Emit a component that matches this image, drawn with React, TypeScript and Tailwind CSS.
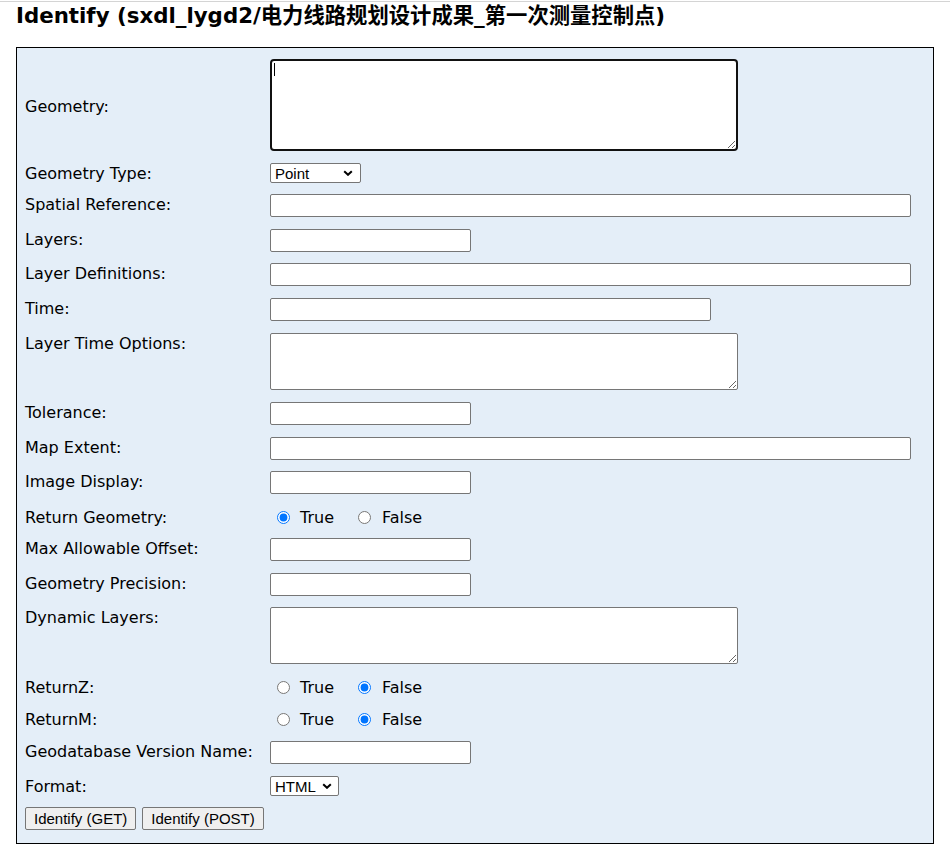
import React from "react";

const LABEL =
  "w-[245px] shrink-0 text-[16px] leading-[19px] text-black font-['DejaVu_Sans','Noto_Sans_CJK_SC',sans-serif]";
const CTRL_FONT =
  "font-['Liberation_Sans',Arial,sans-serif] text-[15px] leading-[17px] text-black";
const INPUT =
  "block h-[23px] border border-[#767676] rounded-[2px] bg-white px-[2px] font-['Liberation_Sans',Arial,sans-serif] text-[15px] text-black outline-none";
const TEXTAREA =
  "block h-[57px] w-[468px] border border-[#767676] rounded-[2px] bg-white p-[2px] font-['Liberation_Mono',monospace] text-[13px] text-black outline-none";

function Row({
  label,
  h,
  labelMt = "mt-[1px]",
  children,
}: {
  label: string;
  h: string;
  labelMt?: string;
  children: React.ReactNode;
}) {
  return (
    <div className={"flex items-start " + h}>
      <div className={LABEL + " " + labelMt}>{label}</div>
      <div className="flex items-start">{children}</div>
    </div>
  );
}

function Chevron({ pos }: { pos: string }) {
  return (
    <svg
      className={"absolute pointer-events-none " + pos}
      width="10"
      height="6"
      viewBox="0 0 10 6"
    >
      <path d="M1.2 1.2 L5 4.8 L8.8 1.2" stroke="#000" strokeWidth="2" fill="none" />
    </svg>
  );
}

function Radios({ name, trueChecked }: { name: string; trueChecked: boolean }) {
  return (
    <div className="flex items-start">
      <label className="flex items-start w-[88px]">
        <input
          type="radio"
          name={name}
          defaultChecked={trueChecked}
          className="m-0 ml-[7px] mt-[4px] w-[13px] h-[13px]"
        />
        <span className="ml-[10px] mt-[1px] text-[16px] leading-[19px] text-black font-['DejaVu_Sans',sans-serif]">
          True
        </span>
      </label>
      <label className="flex items-start">
        <input
          type="radio"
          name={name}
          defaultChecked={!trueChecked}
          className="m-0 mt-[4px] w-[13px] h-[13px]"
        />
        <span className="ml-[11px] mt-[1px] text-[16px] leading-[19px] text-black font-['DejaVu_Sans',sans-serif]">
          False
        </span>
      </label>
    </div>
  );
}

export default function App() {
  return (
    <div className="w-[950px] min-h-[853px] bg-white">
      <div className="mt-[1px] h-[1px] bg-[#d4d4d4]" />
      <h1 className="mt-[1px] ml-[16px] h-[25px] text-[21.33px] leading-[25px] font-bold text-black font-['DejaVu_Sans','Noto_Sans_CJK_SC',sans-serif] whitespace-nowrap">
        Identify (sxdl_lygd2/电力线路规划设计成果_第一次测量控制点)
      </h1>
      <form
        className="mt-[19px] ml-[16px] w-[918px] border border-black bg-[#e4eef8] pl-[8px] pt-[11px] pb-[12px]"
        onSubmit={(e) => e.preventDefault()}
      >
        <Row label="Geometry:" h="h-[104px]" labelMt="mt-[38px]">
          <div className="relative">
            <textarea className="block h-[92px] w-[468px] border-2 border-[#111] rounded-[4px] bg-white p-[2px] font-['Liberation_Mono',monospace] text-[13px] text-black outline-none" />
            <span className="absolute left-[4px] top-[4px] w-px h-[13px] bg-black" />
          </div>
        </Row>
        <Row label="Geometry Type:" h="h-[31px]">
          <div className="relative w-[91px] h-[20px]">
            <select
              className={
                "appearance-none block w-full h-full border border-[#767676] rounded-[2px] bg-white pl-[4px] pr-[18px] outline-none " +
                CTRL_FONT
              }
              defaultValue="Point"
            >
              <option>Point</option>
              <option>Multipoint</option>
              <option>Polyline</option>
              <option>Polygon</option>
              <option>Envelope</option>
            </select>
            <Chevron pos="right-[8px] top-[7px]" />
          </div>
        </Row>
        <Row label="Spatial Reference:" h="h-[35px]">
          <input type="text" className={INPUT + " w-[641px]"} />
        </Row>
        <Row label="Layers:" h="h-[34px]">
          <input type="text" className={INPUT + " w-[201px]"} />
        </Row>
        <Row label="Layer Definitions:" h="h-[35px]">
          <input type="text" className={INPUT + " w-[641px]"} />
        </Row>
        <Row label="Time:" h="h-[35px]">
          <input type="text" className={INPUT + " w-[441px]"} />
        </Row>
        <Row label="Layer Time Options:" h="h-[69px]">
          <textarea className={TEXTAREA} />
        </Row>
        <Row label="Tolerance:" h="h-[35px]">
          <input type="text" className={INPUT + " w-[201px]"} />
        </Row>
        <Row label="Map Extent:" h="h-[34px]">
          <input type="text" className={INPUT + " w-[641px]"} />
        </Row>
        <Row label="Image Display:" h="h-[36px]">
          <input type="text" className={INPUT + " w-[201px]"} />
        </Row>
        <Row label="Return Geometry:" h="h-[31px]">
          <Radios name="returnGeometry" trueChecked={true} />
        </Row>
        <Row label="Max Allowable Offset:" h="h-[35px]">
          <input type="text" className={INPUT + " w-[201px]"} />
        </Row>
        <Row label="Geometry Precision:" h="h-[34px]">
          <input type="text" className={INPUT + " w-[201px]"} />
        </Row>
        <Row label="Dynamic Layers:" h="h-[70px]">
          <textarea className={TEXTAREA} />
        </Row>
        <Row label="ReturnZ:" h="h-[32px]">
          <Radios name="returnZ" trueChecked={false} />
        </Row>
        <Row label="ReturnM:" h="h-[32px]">
          <Radios name="returnM" trueChecked={false} />
        </Row>
        <Row label="Geodatabase Version Name:" h="h-[35px]">
          <input type="text" className={INPUT + " w-[201px]"} />
        </Row>
        <Row label="Format:" h="h-[31px]">
          <div className="relative w-[69px] h-[20px]">
            <select
              className={
                "appearance-none block w-full h-full border border-[#767676] rounded-[2px] bg-white pl-[4px] pr-[16px] outline-none " +
                CTRL_FONT
              }
              defaultValue="HTML"
            >
              <option>HTML</option>
              <option>JSON</option>
              <option>KMZ</option>
            </select>
            <Chevron pos="right-[7px] top-[7px]" />
          </div>
        </Row>
        <div className="flex items-start gap-[6px] h-[24px]">
          <button
            type="button"
            className={
              "h-[23px] px-[8px] border border-[#767676] rounded-[2px] bg-[#efefef] whitespace-nowrap " +
              CTRL_FONT
            }
          >
            Identify (GET)
          </button>
          <button
            type="button"
            className={
              "h-[23px] px-[8px] border border-[#767676] rounded-[2px] bg-[#efefef] whitespace-nowrap " +
              CTRL_FONT
            }
          >
            Identify (POST)
          </button>
        </div>
      </form>
    </div>
  );
}
